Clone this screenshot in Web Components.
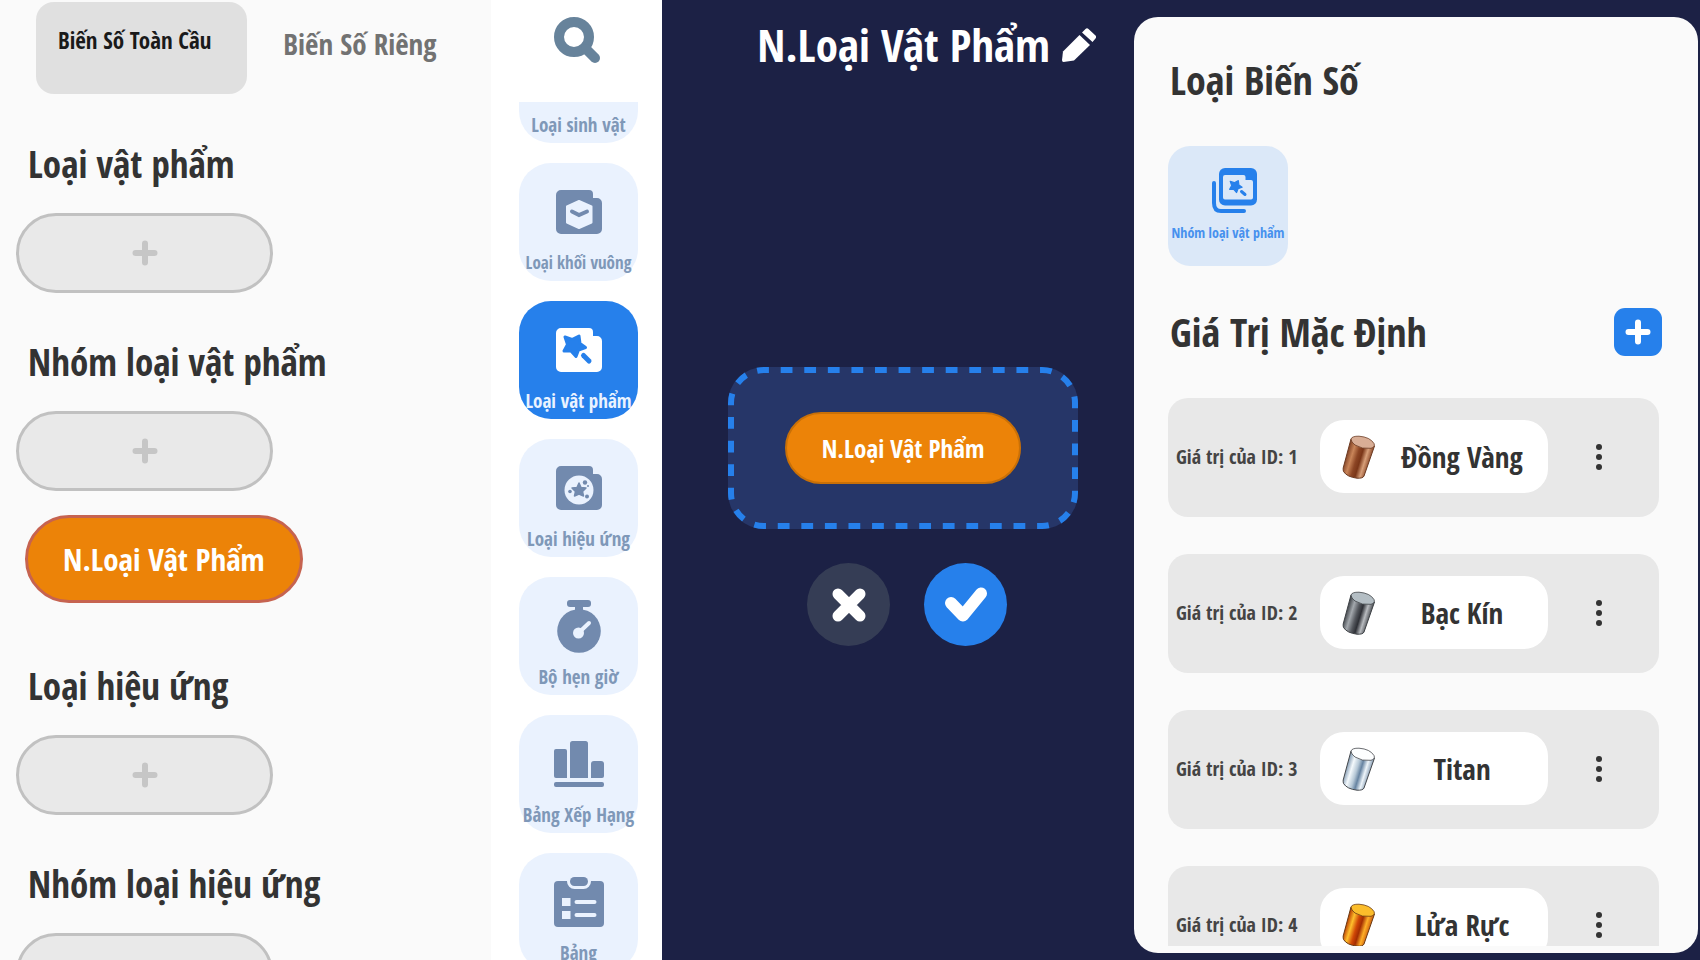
<!DOCTYPE html>
<html lang="vi">
<head>
<meta charset="utf-8">
<title>N.Loại Vật Phẩm</title>
<style>
  html, body { height: 100%; margin: 0; }
  body {
    overflow: hidden;
    background: #1c2145;
    color: #333;
    font-family: "Open Sans Condensed", "Noto Sans", sans-serif;
    font-weight: 700;
  }
</style>
</head>
<body>
<variable-editor>
  <variable-list slot="list">
    <variable-section heading="Loại vật phẩm"></variable-section>
    <variable-section heading="Nhóm loại vật phẩm">
      <variable-chip>N.Loại Vật Phẩm</variable-chip>
    </variable-section>
    <variable-section heading="Loại hiệu ứng"></variable-section>
    <variable-section heading="Nhóm loại hiệu ứng"></variable-section>
  </variable-list>

  <type-nav slot="nav">
    <type-tile icon="creature">Loại sinh vật</type-tile>
    <type-tile icon="block" small>Loại khối vuông</type-tile>
    <type-tile icon="item" selected>Loại vật phẩm</type-tile>
    <type-tile icon="effect">Loại hiệu ứng</type-tile>
    <type-tile icon="timer">Bộ hẹn giờ</type-tile>
    <type-tile icon="ranking">Bảng Xếp Hạng</type-tile>
    <type-tile icon="board">Bảng</type-tile>
  </type-nav>

  <variable-stage slot="stage" name="N.Loại Vật Phẩm">
    <variable-chip compact>N.Loại Vật Phẩm</variable-chip>
  </variable-stage>

  <value-panel slot="panel">
    <value-row number="1" metal="copper">Đồng Vàng</value-row>
    <value-row number="2" metal="silver">Bạc Kín</value-row>
    <value-row number="3" metal="titan">Titan</value-row>
    <value-row number="4" metal="fire">Lửa Rực</value-row>
  </value-panel>
</variable-editor>

<script>
const CARD = '<path fill="currentColor" d="M5 0H33a4 4 0 0 1 4 4v4h4a5 5 0 0 1 5 5V39a5 5 0 0 1-5 5H5a5 5 0 0 1-5-5V5a5 5 0 0 1 5-5Z"/>';
const STAR = 'M9 9 16 11.5 23 8 24 15.5 29.500 19.500 22.500 22 20 28.500 15 23 8 23 11.500 16.500Z';

//[width, height, markup], "--hole" is the colour that shows through the icon
const ICONS = {
  plus: [26, 26, '<path d="M13 3.500V22.500M3.500 13H22.500" stroke="currentColor" stroke-width="6" stroke-linecap="round"/>'],
  search: [46, 46, `<circle cx="20" cy="20" r="15" fill="none" stroke="currentColor" stroke-width="10"/>
    <path d="M32 32 41 41" stroke="currentColor" stroke-width="10" stroke-linecap="round"/>`],
  pencil: [34, 34, `<path fill="currentColor" d="M0 32 1 23.500 17.500 7 28 17 12 32.500 1.500 34Q0 34 0 32Z"/>
    <path fill="currentColor" d="M20 4.500 23.500 1Q25 -.500 26.500 1L33.500 7.500Q35 9 33.500 10.500L30.500 14Z"/>`],
  close: [34, 34, '<path d="M6 6 28 28M28 6 6 28" stroke="currentColor" stroke-width="11" stroke-linecap="round"/>'],
  check: [44, 36, '<path d="M7 16 19 28.500 37 6.500" fill="none" stroke="currentColor" stroke-width="12" stroke-linecap="round" stroke-linejoin="round"/>'],
  dots: [6, 26, '<g fill="currentColor"><circle cx="3" cy="3" r="3"/><circle cx="3" cy="13" r="3"/><circle cx="3" cy="23" r="3"/></g>'],
  creature: [46, 44, CARD],
  block: [46, 44, `${CARD}<path fill="var(--hole)" stroke="var(--hole)" stroke-width="2" stroke-linejoin="round" d="M23 11 35.500 16.500V32.500L23 38 11 32.500V16.500Z"/>
    <path d="M16 21.500 23 25 31 21.500" fill="none" stroke="currentColor" stroke-width="4" stroke-linecap="round"/>`],
  item: [46, 44, `${CARD}<path fill="var(--hole)" stroke="var(--hole)" stroke-width="3" stroke-linejoin="round" d="${STAR}"/>
    <path d="M27.500 27.500 33 33" stroke="var(--hole)" stroke-width="5" stroke-linecap="round"/>`],
  effect: [46, 44, `${CARD}<circle cx="23" cy="24" r="14.500" fill="var(--hole)"/>
    <path fill="currentColor" stroke="currentColor" stroke-width="1.500" stroke-linejoin="round" d="M23 17 25 21.500 30 22 26.500 25.500 27.500 30 23 28 18.500 30 19.500 25.500 16 22 21 21.500Z"/>
    <g fill="currentColor"><circle cx="29" cy="16.500" r="2.200"/><circle cx="14" cy="25.500" r="1.800"/><circle cx="31" cy="30.500" r="2"/><circle cx="32" cy="20" r="1"/></g>`],
  timer: [44, 53, `<g fill="currentColor"><rect x="10" width="24" height="7" rx="3"/><path d="M18 6H26V12H18Z"/><circle cx="22" cy="31" r="21.800"/></g>
    <circle cx="21.500" cy="33" r="5.500" fill="var(--hole)"/><path d="M22 32.500 32 23" stroke="var(--hole)" stroke-width="4" stroke-linecap="round"/>`],
  ranking: [50, 46, `<g fill="currentColor"><path d="M2 8H11a2 2 0 0 1 2 2V37H2a2 2 0 0 1-2-2V10a2 2 0 0 1 2-2Z"/>
    <path d="M18.500 0H31.500A2.500 2.500 0 0 1 34 2.500V37H16V2.500A2.500 2.500 0 0 1 18.500 0Z"/>
    <path d="M40 20H47a3 3 0 0 1 3 3V35a2 2 0 0 1-2 2H37V23a3 3 0 0 1 3-3Z"/><rect y="41" width="50" height="5" rx="2"/></g>`],
  board: [50, 50, `<rect y="4" width="50" height="46" rx="4" fill="currentColor"/>
    <rect x="16" y="0" width="18" height="9" rx="4.500" fill="currentColor" stroke="var(--hole)" stroke-width="6" paint-order="stroke"/>
    <path d="M8 21H16.500V29H8ZM8 34H16.500V42H8Z" fill="var(--hole)"/>
    <path d="M22.500 25H40.500M22.500 38H40.500" stroke="var(--hole)" stroke-width="4" stroke-linecap="round"/>`],
  group: [58, 45, `<g transform="translate(13)"><path d="M2 15V35Q2 43 9 43H32" fill="none" stroke="currentColor" stroke-width="4" stroke-linecap="round"/>
    <rect x="7" width="38" height="37.500" rx="6" fill="currentColor"/>
    <path fill="var(--hole)" d="M13 7H31.500a2 2 0 0 1 2 2V12H39a2 2 0 0 1 2 2V29.500a2 2 0 0 1-2 2H13a2 2 0 0 1-2-2V9a2 2 0 0 1 2-2Z"/>
    <path fill="currentColor" stroke="currentColor" stroke-width="2" stroke-linejoin="round" transform="translate(13 8) scale(.58)" d="${STAR}"/>
    <path d="M29.500 23.500 33 26.500" stroke="currentColor" stroke-width="3" stroke-linecap="round"/></g>`],
};

//outline, lid and the stops of the side gradient
const METALS = {
  copper: ['#6b3a22', '#d9ae96', ['#8a4a2b', '#c98559', '#8c4524', '#7a3618', '#d8a07a', '#8a4626']],
  silver: ['#3d4145', '#b4bec4', ['#4b4f54', '#a3a8ad', '#54575d', '#2e3036', '#b9bcc0', '#45484d']],
  titan: ['#45484c', '#fdfeff', ['#8fa5bb', '#f4f9fc', '#b5c7d6', '#6683a1', '#eef5fa', '#8198b0']],
  fire: ['#6a3a12', '#fbbd2b', ['#c24a06', '#ffc02c', '#d04706', '#a32d02', '#ffb028', '#c9560a']],
};

class AppIcon extends HTMLElement {
  connectedCallback() {
    const [width, height, markup] = ICONS[this.getAttribute('name')];
    this.attachShadow({ mode: 'open' }).innerHTML = `
      <style>:host { display: inline-flex; } svg { display: block; }</style>
      <svg width="${width}" height="${height}" viewBox="0 0 ${width} ${height}" aria-hidden="true">${markup}</svg>
    `;
  }
}

class MetalBar extends HTMLElement {
  connectedCallback() {
    const [line, lid, stops] = METALS[this.getAttribute('metal')];
    const offsets = [0, 20, 42, 58, 78, 100];
    this.attachShadow({ mode: 'open' }).innerHTML = `
      <style>:host { display: inline-flex; } svg { display: block; }</style>
      <svg width="34" height="44" viewBox="0 0 34 44" aria-hidden="true">
        <linearGradient id="side" gradientUnits="userSpaceOnUse" x1="5" y1="20" x2="28" y2="27">
          ${stops.map((color, i) => `<stop offset="${offsets[i]}%" stop-color="${color}"/>`).join('')}
        </linearGradient>
        <path d="M9 4 32.500 11 22 41Q21 43.500 15 43.200 5 42 1.500 36.500 1 35 1.200 33Z" fill="url(#side)" stroke="${line}" stroke-linejoin="round"/>
        <path d="M9 4Q10 1 17 1.200 28 2 32 8.500 33.500 12 29 13.300 20 14.500 13 10 9 7 9 4Z" fill="${lid}" stroke="${line}" stroke-width=".8"/>
      </svg>
    `;
  }
}

class VariableEditor extends HTMLElement {
  connectedCallback() {
    this.attachShadow({ mode: 'open' }).innerHTML = `
      <style>
        :host {
          display: grid;
          grid-template-columns: 491fr 171fr 472fr 566fr;
          grid-template-rows: minmax(0, 1fr);
          height: 100vh;
        }
      </style>
      <slot name="list"></slot>
      <slot name="nav"></slot>
      <slot name="stage"></slot>
      <slot name="panel"></slot>
    `;
  }
}

class VariableList extends HTMLElement {
  connectedCallback() {
    this.attachShadow({ mode: 'open' }).innerHTML = `
      <style>
        :host { display: block; overflow: hidden; background: #fafafa; }
        .tabs { display: flex; padding: 2px 0 0 36px; margin-bottom: 45px; }
        button {
          display: flex;
          align-items: flex-start;
          box-sizing: border-box;
          height: 92px;
          border: 0;
          background: none;
          font: inherit;
          color: #727272;
          white-space: nowrap;
          padding: 22px 36px;
          font-size: 29px;
          line-height: 40px;
        }
        button[aria-selected=true] {
          padding: 22px 36px 22px 22px;
          border-radius: 18px;
          background: #e0e0e0;
          color: #1a1a1a;
          font-size: 23px;
          line-height: 32px;
        }
        .sections { display: flex; flex-direction: column; gap: 44px; padding: 0 16px; }
      </style>
      <div class="tabs" role="tablist">
        <button role="tab" aria-selected="true">Biến Số Toàn Cầu</button>
        <button role="tab" aria-selected="false">Biến Số Riêng</button>
      </div>
      <div class="sections"><slot></slot></div>
    `;
  }
}

class VariableSection extends HTMLElement {
  connectedCallback() {
    this.attachShadow({ mode: 'open' }).innerHTML = `
      <style>
        :host { display: flex; flex-direction: column; align-items: flex-start; gap: 24px; }
        h2 { margin: 0; padding-left: 12px; font-size: 37px; line-height: 50px; white-space: nowrap; }
        button {
          display: flex;
          align-items: center;
          justify-content: center;
          box-sizing: border-box;
          width: 257px;
          height: 80px;
          border: 3px solid #c1c1c1;
          border-radius: 40px;
          background: #e9e9e9;
          color: #c6c6c6;
        }
        ::slotted(*) { margin: 0 9px 14px; }
      </style>
      <h2></h2>
      <button aria-label="Thêm"><app-icon name="plus"></app-icon></button>
      <slot></slot>
    `;
    this.shadowRoot.querySelector('h2').textContent = this.getAttribute('heading');
  }
}

class VariableChip extends HTMLElement {
  connectedCallback() {
    this.attachShadow({ mode: 'open' }).innerHTML = `
      <style>
        :host { display: inline-flex; }
        button {
          padding: 20px 35px;
          border: 3px solid #c66350;
          border-radius: 44px;
          background: #ec8308;
          color: #fff;
          font: inherit;
          font-size: 31px;
          line-height: 42px;
          white-space: nowrap;
        }
        :host([compact]) button {
          padding: 16px 35px;
          border: 2px solid #c97007;
          border-radius: 36px;
          font-size: 25px;
          line-height: 36px;
        }
      </style>
      <button><slot></slot></button>
    `;
  }
}

class TypeNav extends HTMLElement {
  connectedCallback() {
    this.attachShadow({ mode: 'open' }).innerHTML = `
      <style>
        :host { display: flex; flex-direction: column; background: #fff; }
        .search {
          display: flex;
          justify-content: center;
          padding: 17px 0 39px;
          border: 0;
          background: none;
          color: #67839b;
        }
        nav {
          display: flex;
          flex: 1;
          flex-direction: column;
          align-items: center;
          gap: 20px;
          min-height: 0;
          overflow: hidden;
          padding-left: 4px;
        }
      </style>
      <button class="search" aria-label="Tìm"><app-icon name="search"></app-icon></button>
      <nav><slot></slot></nav>
    `;
    //the list is opened part of the way down
    customElements.whenDefined('type-tile').then(() => {
      this.shadowRoot.querySelector('nav').scrollTop = 77;
    });
  }
}

class TypeTile extends HTMLElement {
  connectedCallback() {
    this.attachShadow({ mode: 'open' }).innerHTML = `
      <style>
        :host { display: block; flex: none; --hole: #eaf2fe; }
        :host([selected]) { --hole: #2680eb; }
        button {
          display: flex;
          flex-direction: column;
          align-items: center;
          gap: 12px;
          width: 119px;
          padding: 22px 0 6px;
          border: 0;
          border-radius: 32px;
          background: #eaf2fe;
          color: #728aae;
          font: inherit;
          font-size: 19px;
          line-height: 24px;
          white-space: nowrap;
        }
        :host([small]) button { font-size: 17px; }
        :host([selected]) button { background: #2680eb; color: #fff; }
        .icon { display: flex; align-items: center; height: 54px; }
        .label { color: #7f98b8; }
        :host([selected]) .label { color: #eaf3ff; }
      </style>
      <button>
        <span class="icon"><app-icon name="${this.getAttribute('icon')}"></app-icon></span>
        <span class="label"><slot></slot></span>
      </button>
    `;
  }
}

class VariableStage extends HTMLElement {
  connectedCallback() {
    this.attachShadow({ mode: 'open' }).innerHTML = `
      <style>
        :host { display: flex; flex-direction: column; color: #fff; }
        header {
          display: flex;
          align-items: center;
          justify-content: flex-end;
          gap: 12px;
          padding: 15px 38px 0 0;
        }
        h1 { margin: 0; font-size: 45px; line-height: 60px; white-space: nowrap; }
        button { display: flex; align-items: center; justify-content: center; padding: 0; border: 0; background: none; color: #fff; }
        .work {
          display: flex;
          flex: 1;
          flex-direction: column;
          align-items: center;
          justify-content: center;
          gap: 34px;
          padding: 0 0 22px 10px;
        }
        .drop {
          display: grid;
          place-items: center;
          width: 350px;
          height: 162px;
          border-radius: 36px;
          background: #263668;
        }
        .drop > * { grid-area: 1 / 1; }
        .drop svg { width: 100%; height: 100%; }
        .drop rect {
          width: calc(100% - 6px);
          height: calc(100% - 6px);
          fill: none;
          stroke: #2680eb;
          stroke-width: 6px;
          stroke-dasharray: 12 12;
          stroke-dashoffset: 7px;
        }
        .actions { display: flex; gap: 34px; padding-left: 8px; }
        .actions button { width: 83px; height: 83px; border-radius: 50%; background: #353d55; }
        .actions .confirm { background: #2680eb; }
      </style>
      <header>
        <h1></h1>
        <button aria-label="Đổi tên"><app-icon name="pencil"></app-icon></button>
      </header>
      <div class="work">
        <div class="drop">
          <svg aria-hidden="true"><rect x="3" y="3" rx="33" pathLength="960"/></svg>
          <div><slot></slot></div>
        </div>
        <div class="actions">
          <button aria-label="Hủy"><app-icon name="close"></app-icon></button>
          <button class="confirm" aria-label="Xác nhận"><app-icon name="check"></app-icon></button>
        </div>
      </div>
    `;
    this.shadowRoot.querySelector('h1').textContent = this.getAttribute('name');
  }
}

class ValuePanel extends HTMLElement {
  connectedCallback() {
    this.attachShadow({ mode: 'open' }).innerHTML = `
      <style>
        :host {
          display: flex;
          flex-direction: column;
          gap: 38px;
          box-sizing: border-box;
          margin: 17px 2px 7px 0;
          padding: 35px 36px 7px 34px;
          border-radius: 24px;
          background: #fafafa;
        }
        h2 { margin: 0; padding-left: 2px; font-size: 40px; line-height: 56px; white-space: nowrap; }
        .type {
          --hole: #dbe8f8;
          display: flex;
          flex: none;
          flex-direction: column;
          align-items: center;
          align-self: flex-start;
          gap: 10px;
          width: 120px;
          height: 120px;
          padding: 22px 0;
          border: 0;
          border-radius: 22px;
          background: #dbe8f8;
          color: #2680eb;
          font: inherit;
          font-size: 14px;
          line-height: 20px;
          white-space: nowrap;
        }
        .type span { color: #4791ee; }
        .head { display: flex; align-items: center; justify-content: space-between; }
        .add {
          display: flex;
          align-items: center;
          justify-content: center;
          width: 48px;
          height: 48px;
          padding: 0;
          border: 0;
          border-radius: 11px;
          background: #2680eb;
          color: #fff;
        }
        .rows { display: flex; flex: 1; flex-direction: column; gap: 37px; min-height: 0; overflow: hidden; padding-right: 3px; }
      </style>
      <h2>Loại Biến Số</h2>
      <button class="type"><app-icon name="group"></app-icon><span>Nhóm loại vật phẩm</span></button>
      <div class="head">
        <h2>Giá Trị Mặc Định</h2>
        <button class="add" aria-label="Thêm giá trị"><app-icon name="plus"></app-icon></button>
      </div>
      <div class="rows"><slot></slot></div>
    `;
  }
}

class ValueRow extends HTMLElement {
  connectedCallback() {
    this.attachShadow({ mode: 'open' }).innerHTML = `
      <style>
        :host {
          display: grid;
          flex: none;
          grid-template-columns: 152fr 228fr 101fr;
          align-items: center;
          box-sizing: border-box;
          height: 119px;
          padding: 0 10px 2px 0;
          border-radius: 20px;
          background: #e8e8e8;
        }
        .id { padding-left: 8px; font-size: 20px; line-height: 28px; white-space: nowrap; color: #444; }
        button { border: 0; background: none; color: inherit; font: inherit; }
        .value {
          display: grid;
          grid-template-columns: 56px 1fr;
          align-items: center;
          height: 73px;
          padding: 0;
          border-radius: 24px;
          background: #fff;
          font-size: 29px;
          line-height: 40px;
          white-space: nowrap;
        }
        .value metal-bar { justify-self: end; }
        .more { justify-self: center; display: flex; padding: 8px; }
      </style>
      <label class="id" for="value">Giá trị của ID: ${this.getAttribute('number')}</label>
      <button class="value" id="value">
        <metal-bar metal="${this.getAttribute('metal')}"></metal-bar>
        <span><slot></slot></span>
      </button>
      <button class="more" aria-label="Tùy chọn"><app-icon name="dots"></app-icon></button>
    `;
  }
}

customElements.define('app-icon', AppIcon);
customElements.define('metal-bar', MetalBar);
customElements.define('variable-editor', VariableEditor);
customElements.define('variable-list', VariableList);
customElements.define('variable-section', VariableSection);
customElements.define('variable-chip', VariableChip);
customElements.define('type-nav', TypeNav);
customElements.define('type-tile', TypeTile);
customElements.define('variable-stage', VariableStage);
customElements.define('value-panel', ValuePanel);
customElements.define('value-row', ValueRow);
</script>
</body>
</html>
